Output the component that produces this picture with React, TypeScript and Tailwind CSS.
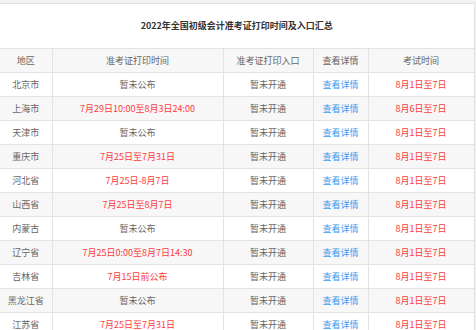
const rows: [string, string, boolean, string][] = [
  ["北京市", "暂未公布", false, "8月1日至7日"],
  ["上海市", "7月29日10:00至8月3日24:00", true, "8月6日至7日"],
  ["天津市", "暂未公布", false, "8月1日至7日"],
  ["重庆市", "7月25日至7月31日", true, "8月1日至7日"],
  ["河北省", "7月25日-8月7日", true, "8月1日至7日"],
  ["山西省", "7月25日至8月7日", true, "8月1日至7日"],
  ["内蒙古", "暂未公布", false, "8月1日至7日"],
  ["辽宁省", "7月25日0:00至8月7日14:30", true, "8月1日至7日"],
  ["吉林省", "7月15日前公布", true, "8月1日至7日"],
  ["黑龙江省", "暂未公布", false, "8月1日至7日"],
  ["江苏省", "7月25日至7月31日", true, "8月1日至7日"],
];

const App = () => {
  return (
    <div
      className="w-[476px] h-[330px] overflow-hidden bg-[#f2f2f2] pt-[3px] pr-[2px]"
      style={{ fontFamily: '"Noto Sans CJK SC", "Liberation Sans", sans-serif' }}
    >
      <table className="w-[474px] table-fixed border-collapse bg-white text-[9px] text-[#666]">
        <colgroup>
          <col className="w-[52px]" />
          <col className="w-[171px]" />
          <col className="w-[90px]" />
          <col className="w-[55px]" />
          <col className="w-[106px]" />
        </colgroup>
        <tbody>
          {/* title */}
          <tr className="h-[45px]">
            <td colSpan={5} className="border border-[#e3e3e3] border-l-0 text-center font-bold text-[#333]">
              2022年全国初级会计准考证打印时间及入口汇总
            </td>
          </tr>
          {/* header */}
          <tr className="h-[24px] bg-[#f7f7f7]">
            <td className="border border-[#e3e3e3] border-l-0 text-center">地区</td>
            <td className="border border-[#e3e3e3] text-center">准考证打印时间</td>
            <td className="border border-[#e3e3e3] text-center">准考证打印入口</td>
            <td className="border border-[#e3e3e3] text-center">查看详情</td>
            <td className="border border-[#e3e3e3] text-center">考试时间</td>
          </tr>
          {rows.map((r, i) => (
            <tr key={r[0]} className={i % 2 === 1 ? "h-[24px] bg-[#f7f7f7]" : "h-[24px] bg-white"}>
              <td className="border border-[#e3e3e3] border-l-0 text-center">{r[0]}</td>
              <td className={r[2] ? "border border-[#e3e3e3] text-center text-[#ff3b3b]" : "border border-[#e3e3e3] text-center"}>
                {r[1]}
              </td>
              <td className="border border-[#e3e3e3] text-center">暂未开通</td>
              <td className="border border-[#e3e3e3] text-center text-[#3a9cf0]">查看详情</td>
              <td className="border border-[#e3e3e3] text-center text-[#ff3b3b]">{r[3]}</td>
            </tr>
          ))}
        </tbody>
      </table>
    </div>
  );
};

export default App;
